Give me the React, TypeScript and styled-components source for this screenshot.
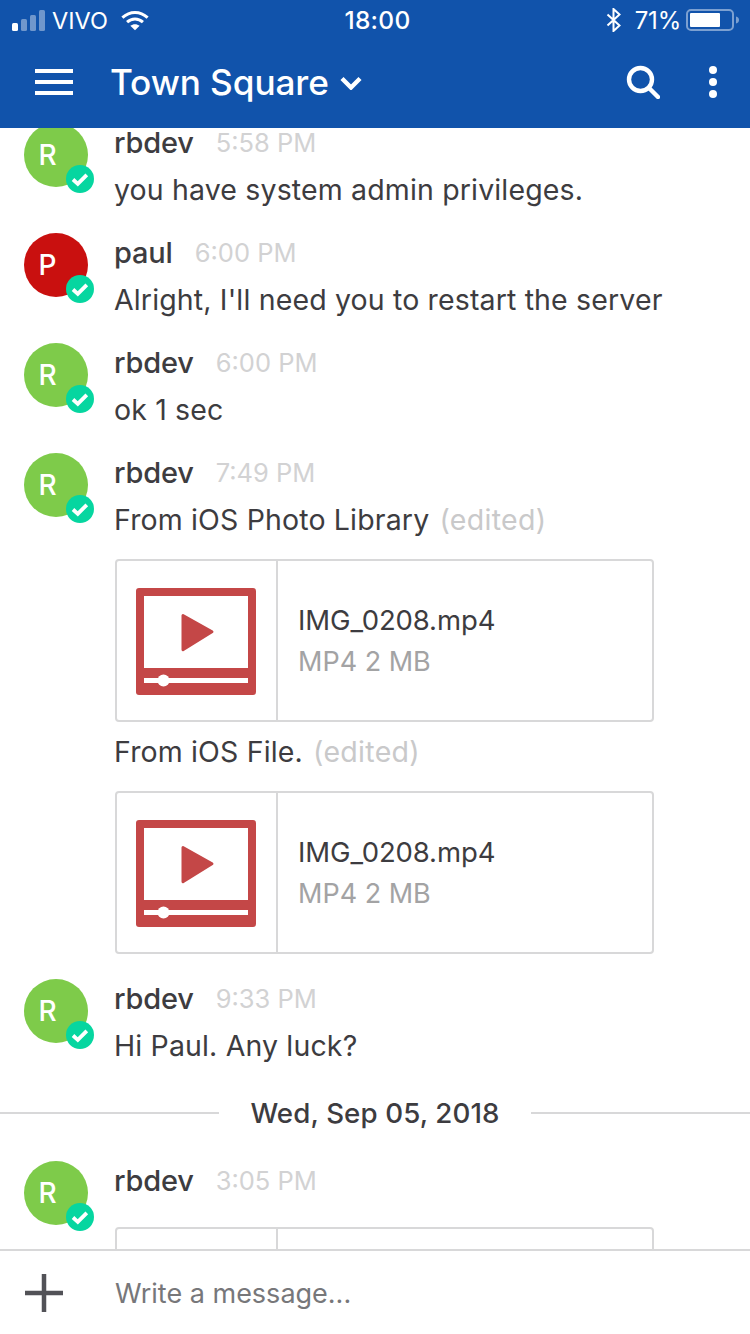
import React from "react";
import styled, { createGlobalStyle } from "styled-components";

const Global = createGlobalStyle`
  html, body { margin: 0; padding: 0; background: #fff; }
  body { font-family: Inter, "Liberation Sans", sans-serif; }
`;

const Page = styled.div`
  width: 750px;
  height: 1334px;
  display: flex;
  flex-direction: column;
  overflow: hidden;
  background: #fff;
`;

const TopArea = styled.header`
  flex: none;
  height: 128px;
  background: #1153ab;
  color: #fff;
  display: flex;
  flex-direction: column;
  position: relative;
  z-index: 1;
`;

const StatusBar = styled.div`
  height: 40px;
  display: grid;
  grid-template-columns: 1fr auto 1fr;
  align-items: center;
  padding: 0 10px 0 12px;
  font-size: 24px;
  font-weight: 400;
`;

const StatusLeft = styled.div`
  display: flex;
  align-items: center;
`;

const StatusRight = styled.div`
  display: flex;
  align-items: center;
  justify-content: flex-end;
`;

const Carrier = styled.span`
  margin: 0 13px 0 7px;
  font-size: 23.5px;
`;

const Clock = styled.span`
  margin-left: 3px;
  font-size: 24.5px;
  font-weight: 500;
  letter-spacing: 0.3px;
`;

const Percent = styled.span`
  margin: 0 5px 0 13px;
  letter-spacing: -0.2px;
`;

const NavBar = styled.div`
  height: 88px;
  box-sizing: border-box;
  padding: 0 32px 4px 35px;
  display: flex;
  align-items: center;
`;

const Title = styled.h1`
  margin: 0 0 0 37px;
  font-size: 35.2px;
  font-weight: 500;
  letter-spacing: -0.1px;
  display: flex;
  align-items: center;
  flex: 1;
`;

const TitleChevron = styled.svg`
  margin: 2px 0 0 11px;
`;

const SearchIcon = styled.svg`
  margin-right: 48px;
`;

const Scroller = styled.main`
  flex: 1;
  min-height: 0;
  overflow: hidden;
  position: relative;
`;

const ScrollContent = styled.div`
  margin-top: -5px;
`;

const Row = styled.article`
  display: flex;
  gap: 27px;
  padding: 0 96px 20px 24px;
`;

const AvatarWrap = styled.div`
  position: relative;
  flex: none;
  width: 64px;
  height: 64px;
`;

const Avatar = styled.div<{ $bg: string }>`
  width: 64px;
  height: 64px;
  box-sizing: border-box;
  padding-right: 17px;
  border-radius: 50%;
  background: ${(p) => p.$bg};
  color: #fff;
  font-size: 28px;
  font-weight: 500;
  display: flex;
  align-items: center;
  justify-content: center;
`;

const Badge = styled.svg`
  position: absolute;
  left: 42px;
  top: 42px;
`;

const Body = styled.div`
  flex: 1;
  min-width: 0;
  color: #3d3c40;
`;

const MetaLine = styled.div`
  height: 40px;
  box-sizing: border-box;
  padding-bottom: 2px;
  display: flex;
  align-items: center;
  gap: 22px;
  margin: 0 0 4px -1px;
`;

const Name = styled.span`
  font-size: 29px;
  font-weight: 500;
  letter-spacing: -0.2px;
  white-space: nowrap;
`;

const Time = styled.span`
  font-size: 25.5px;
  color: #d2d2d3;
  white-space: nowrap;
`;

const Text = styled.p`
  margin: 0 0 0 -1px;
  font-size: 28.5px;
  line-height: 46px;
  white-space: nowrap;
  letter-spacing: 0.15px;
`;

const Edited = styled.span`
  color: #c9c9ca;
  margin-left: 2px;
  letter-spacing: 0.3px;
`;

const Card = styled.div<{ $before: number; $after: number }>`
  box-sizing: border-box;
  width: 539px;
  height: 163px;
  margin: ${(p) => p.$before}px 0 ${(p) => p.$after}px;
  border: 2px solid #d8d8d9;
  border-radius: 4px;
  display: flex;
`;

const CardThumb = styled.div`
  flex: none;
  width: 161px;
  height: 100%;
  box-sizing: border-box;
  padding: 2px 1px 0 0;
  border-right: 2px solid #d8d8d9;
  display: flex;
  align-items: center;
  justify-content: center;
`;

const CardInfo = styled.div`
  flex: 1;
  padding-left: 20px;
  display: flex;
  flex-direction: column;
  justify-content: center;
  gap: 10px;
`;

const FileName = styled.div`
  font-size: 27.5px;
  line-height: 32px;
  letter-spacing: -0.1px;
`;

const FileMeta = styled.div`
  font-size: 27px;
  line-height: 32px;
  color: #a3a3a4;
`;

const DateDivider = styled.div`
  display: flex;
  align-items: center;
  height: 48px;
  margin: 0 0 24px;
  color: #3d3c40;
  font-size: 27.7px;
  font-weight: 500;
  letter-spacing: 0.1px;
  white-space: nowrap;
  &::before, &::after {
    content: "";
    flex: 1;
    height: 2px;
    background: #d8d8d9;
  }
  & > span { padding: 0 31px; }
`;

const Composer = styled.footer`
  flex: none;
  height: 85px;
  box-sizing: border-box;
  border-top: 2px solid #d8d8d9;
  display: flex;
  align-items: center;
  padding-left: 25px;
  background: #fff;
  position: relative;
`;

const Placeholder = styled.span`
  margin: 2px 0 0 52px;
  font-size: 27px;
  color: #77777a;
`;

const CheckBadge = () => (
  <Badge width="28" height="28" viewBox="0 0 28 28">
    <circle cx="14" cy="14" r="14" fill="#06d6a0" />
    <path d="M7 14.500l4.800 4.300 9-9" fill="none" stroke="#fff" strokeWidth="3.800" />
  </Badge>
);

const VideoIcon = () => (
  <svg width="120" height="107" viewBox="0 0 120 107">
    <rect width="120" height="107" rx="3" fill="#c44747" />
    <rect x="8" y="8" width="104" height="72" fill="#fff" />
    <path d="M45.500 27.500a1.500 1.500 0 0 1 2.200-1.200l29 16.200a1.500 1.500 0 0 1 0 2.600l-29 18a1.500 1.500 0 0 1-2.200-1.300z" fill="#c44747" />
    <rect x="8" y="90" width="104" height="5" fill="#fff" />
    <circle cx="27.500" cy="92.500" r="6" fill="#fff" />
  </svg>
);

const Attachment = ({ before = 16, after = 0 }: { before?: number; after?: number }) => (
  <Card $before={before} $after={after}>
    <CardThumb>
      <VideoIcon />
    </CardThumb>
    <CardInfo>
      <FileName>IMG_0208.mp4</FileName>
      <FileMeta>MP4 2 MB</FileMeta>
    </CardInfo>
  </Card>
);

const ClippedAttachment = ({ before }: { before: number }) => (
  <Card $before={before} $after={0}>
    <CardThumb />
  </Card>
);

const Message = ({
  name,
  time,
  children,
}: {
  name: string;
  time: string;
  children?: React.ReactNode;
}) => (
  <Row>
    <AvatarWrap>
      <Avatar $bg={name === "paul" ? "#c9100f" : "#7ecb4a"}>{name[0].toUpperCase()}</Avatar>
      <CheckBadge />
    </AvatarWrap>
    <Body>
      <MetaLine>
        <Name>{name}</Name>
        <Time>{time}</Time>
      </MetaLine>
      {children}
    </Body>
  </Row>
);

export default function App() {
  return (
    <Page>
      <Global />
      <TopArea>
        <StatusBar>
          <StatusLeft>
            <svg width="33" height="21" viewBox="0 0 33 21">
              <rect x="0" y="13" width="6" height="8" rx="1.500" fill="#fff" />
              <rect x="9" y="9" width="6" height="12" rx="1.500" fill="#fff" opacity="0.4" />
              <rect x="18" y="5" width="6" height="16" rx="1.500" fill="#fff" opacity="0.4" />
              <rect x="27" y="0" width="6" height="21" rx="1.500" fill="#fff" opacity="0.4" />
            </svg>
            <Carrier>VIVO</Carrier>
            <svg width="28" height="21" viewBox="0 0 30 21">
              <path d="M1.500 7.500C9.500 0 20.500 0 28.500 7.500" fill="none" stroke="#fff" strokeWidth="3.200" />
              <path d="M6.500 12.300c5-4.600 12-4.600 17 0" fill="none" stroke="#fff" strokeWidth="3.200" />
              <path d="M15 21l-5-4.800c3-2.400 7-2.400 10 0z" fill="#fff" />
            </svg>
          </StatusLeft>
          <Clock>18:00</Clock>
          <StatusRight>
            <svg width="16" height="24" viewBox="0 0 16 24">
              <path d="M1.500 6.500l12 11-6 5.500V1l6 5.500-12 11" fill="none" stroke="#fff" strokeWidth="2" />
            </svg>
            <Percent>71%</Percent>
            <svg width="54" height="24" viewBox="0 0 54 24">
              <rect x="1" y="2" width="46" height="20" rx="4" fill="none" stroke="#fff" strokeOpacity="0.45" strokeWidth="2" />
              <rect x="4" y="5" width="30" height="14" rx="1" fill="#fff" />
              <path d="M50 8.500c2 .5 3 1.800 3 3.500s-1 3-3 3.500z" fill="#fff" fillOpacity="0.45" />
            </svg>
          </StatusRight>
        </StatusBar>
        <NavBar>
          <svg width="38" height="26" viewBox="0 0 38 26">
            <path d="M0 2h38M0 13h38M0 24h38" stroke="#fff" strokeWidth="4" />
          </svg>
          <Title>
            Town Square
            <TitleChevron width="22" height="14" viewBox="0 0 22 14">
              <path d="M2 2.500l9 9 9-9" fill="none" stroke="#fff" strokeWidth="4.400" />
            </TitleChevron>
          </Title>
          <SearchIcon width="34" height="34" viewBox="0 0 34 34">
            <circle cx="14.500" cy="14.500" r="11.500" fill="none" stroke="#fff" strokeWidth="4.400" />
            <path d="M23 23l9 9" stroke="#fff" strokeWidth="4.400" strokeLinecap="round" />
          </SearchIcon>
          <svg width="10" height="32" viewBox="0 0 10 32">
            <circle cx="5" cy="4" r="4" fill="#fff" />
            <circle cx="5" cy="16" r="4" fill="#fff" />
            <circle cx="5" cy="28" r="4" fill="#fff" />
          </svg>
        </NavBar>
      </TopArea>
      <Scroller>
        <ScrollContent>
          <Message name="rbdev" time="5:58 PM">
            <Text>you have system admin privileges.</Text>
          </Message>
          <Message name="paul" time="6:00 PM">
            <Text>Alright, I'll need you to restart the server</Text>
          </Message>
          <Message name="rbdev" time="6:00 PM">
            <Text>ok 1 sec</Text>
          </Message>
          <Message name="rbdev" time="7:49 PM">
            <Text>
              From iOS Photo Library <Edited>(edited)</Edited>
            </Text>
            <Attachment after={7} />
            <Text>
              From iOS File. <Edited>(edited)</Edited>
            </Text>
            <Attachment after={5} />
          </Message>
          <Message name="rbdev" time="9:33 PM">
            <Text>Hi Paul. Any luck?</Text>
          </Message>
          <DateDivider>
            <span>Wed, Sep 05, 2018</span>
          </DateDivider>
          <Message name="rbdev" time="3:05 PM">
            <ClippedAttachment before={26} />
          </Message>
        </ScrollContent>
      </Scroller>
      <Composer>
        <svg width="38" height="38" viewBox="0 0 38 38">
          <path d="M19 0v38M0 19h38" stroke="#525257" strokeWidth="4.500" />
        </svg>
        <Placeholder>Write a message...</Placeholder>
      </Composer>
    </Page>
  );
}
